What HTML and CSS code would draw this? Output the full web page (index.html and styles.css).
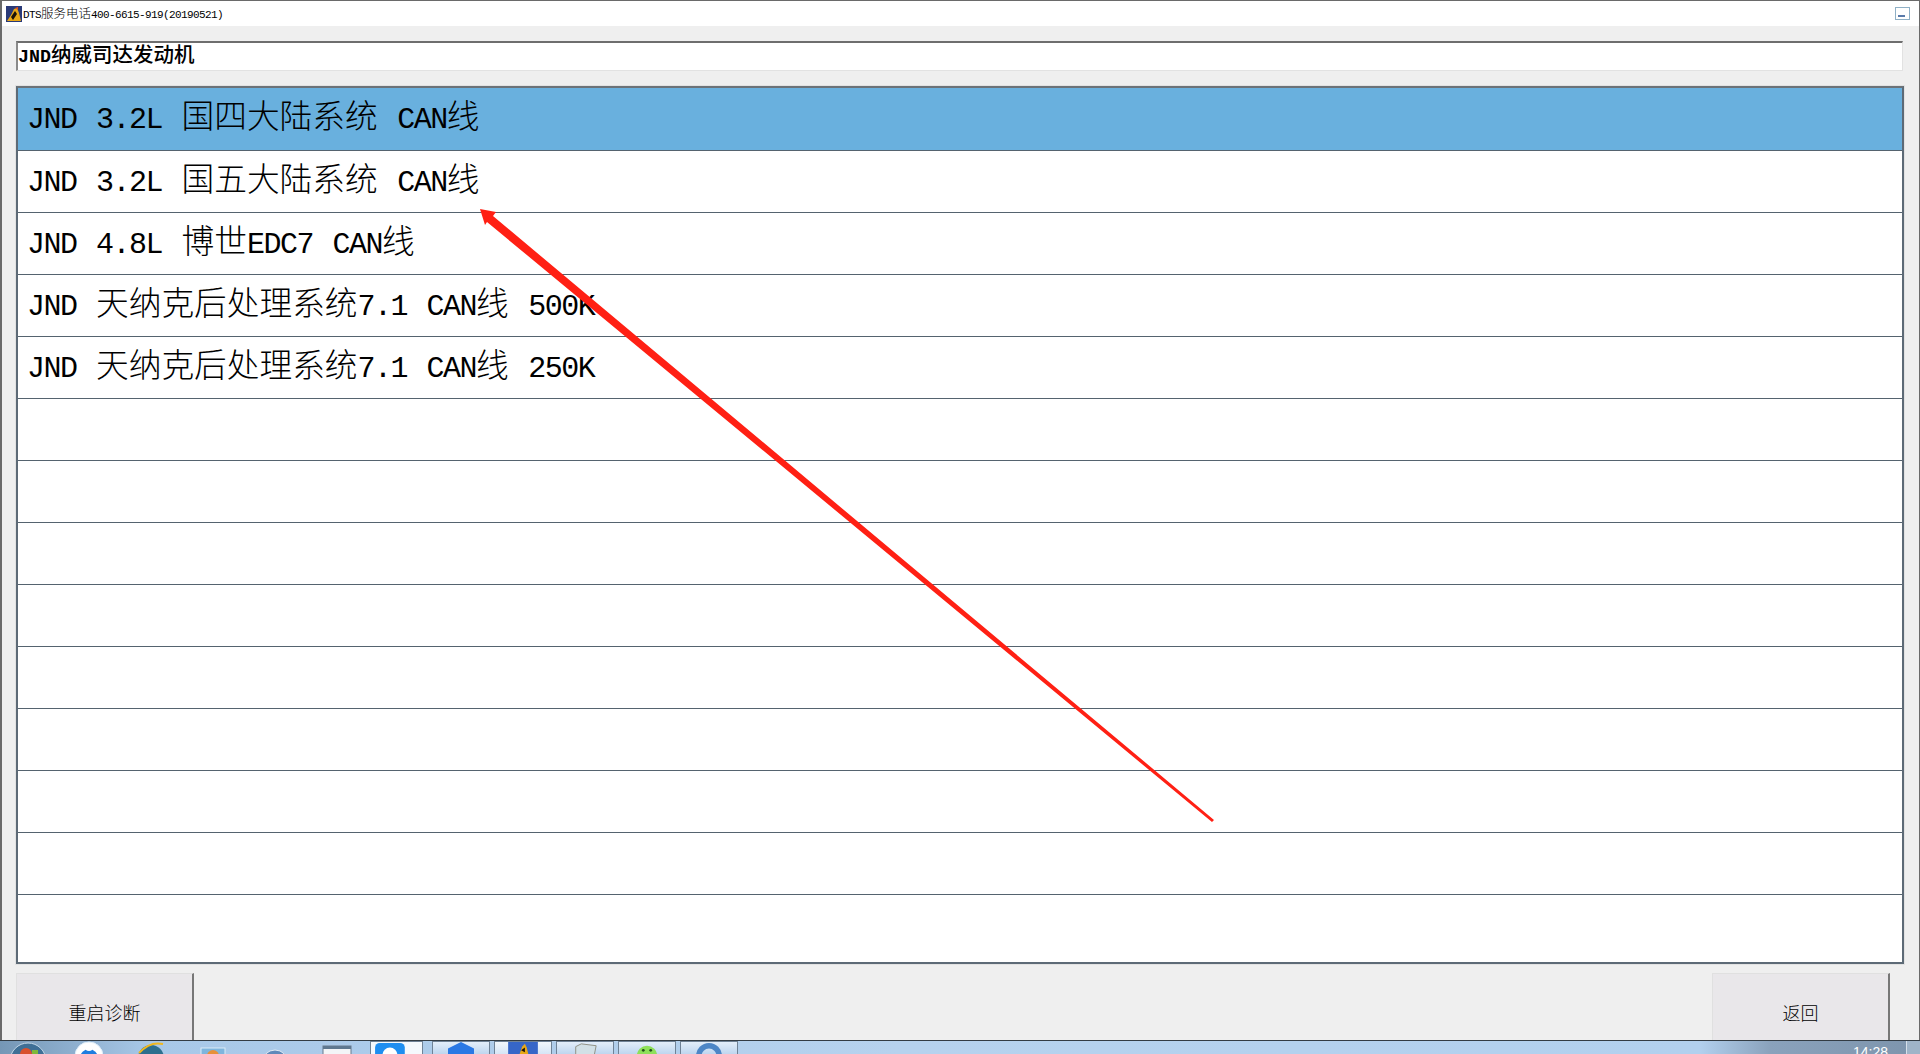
FILE: index.html
```html
<!DOCTYPE html>
<html lang="zh-CN">
<head>
<meta charset="utf-8">
<title>DTS</title>
<link rel="stylesheet" href="styles.css">
</head>
<body>
<div class="window">
  <header class="titlebar">
    <svg class="app-icon" viewBox="0 0 16 16"><rect width="16" height="16" fill="#2a3a78"/><path d="M1 15 L5 9 L8 3 L11 2 L13 7 L15 15 Z" fill="#e8a818"/><path d="M5 11 L9 5 L11 8 L7 14 Z" fill="#1a1208"/><path d="M9 2 L12 1 L12 4 Z" fill="#e8501a"/></svg>
    <span class="title"><span class="lat">DTS</span>服务电话<span class="lat">400-6615-919(20190521)</span></span>
    <span class="min-btn"><i></i></span>
  </header>
  <main class="content">
    <div class="path-box"><span class="lat">JND</span>纳威司达发动机</div>
    <div class="list">
      <div class="row selected"><span class="lat">JND 3.2L </span>国四大陆系统<span class="lat"> CAN</span>线</div>
      <div class="row"><span class="lat">JND 3.2L </span>国五大陆系统<span class="lat"> CAN</span>线</div>
      <div class="row"><span class="lat">JND 4.8L </span>博世<span class="lat">EDC7 CAN</span>线</div>
      <div class="row"><span class="lat">JND </span>天纳克后处理系统<span class="lat">7.1 CAN</span>线<span class="lat"> 500K</span></div>
      <div class="row"><span class="lat">JND </span>天纳克后处理系统<span class="lat">7.1 CAN</span>线<span class="lat"> 250K</span></div>
      <div class="row"></div>
      <div class="row"></div>
      <div class="row"></div>
      <div class="row"></div>
      <div class="row"></div>
      <div class="row"></div>
      <div class="row"></div>
      <div class="row"></div>
      <div class="row last"></div>
    </div>
    <div class="actions">
      <button class="btn">重启诊断</button>
      <button class="btn">返回</button>
    </div>
  </main>
  <footer class="taskbar">
    <svg class="orb" viewBox="0 0 40 14"><circle cx="20" cy="20" r="18" fill="#3f6f96" stroke="#c4d8e8"/><circle cx="18" cy="13" r="6" fill="#d9502e"/><path d="M24 9h6v5h-6z" fill="#7fb83a"/></svg>
    <div class="pins">
      <svg class="pin" viewBox="0 0 30 14"><circle cx="15" cy="15" r="14" fill="#fff" stroke="#dfeefa"/><circle cx="15" cy="17" r="9" fill="#1f7de0"/><circle cx="15" cy="6" r="4" fill="#fff"/></svg>
      <svg class="pin" viewBox="0 0 30 14"><circle cx="15" cy="17" r="13" fill="#2d6f8e"/><path d="M3 12 Q14 0 27 3" fill="none" stroke="#f0b820" stroke-width="2"/></svg>
      <svg class="pin" viewBox="0 0 30 14"><rect x="3" y="7" width="24" height="8" fill="#7fb5dd" stroke="#dcecf7"/><circle cx="15" cy="15" r="6" fill="#e8913a"/></svg>
      <svg class="pin" viewBox="0 0 30 14"><circle cx="15" cy="22" r="13" fill="#5f89ba" stroke="#e2ecf5"/></svg>
      <svg class="pin" viewBox="0 0 30 14"><rect x="1" y="5" width="28" height="10" fill="#f3f5f7" stroke="#6b7b8c"/><rect x="1" y="5" width="28" height="3" fill="#5f7890"/></svg>
    </div>
    <div class="tasks">
      <div class="task active"><svg viewBox="0 0 36 14"><rect x="3" y="1" width="32" height="16" rx="5" fill="#1f8ef0"/><circle cx="19" cy="14" r="8" fill="#fff"/></svg></div>
      <div class="task"><svg viewBox="0 0 36 14"><path d="M4 7 L18 0 L32 7 V14 H4 Z" fill="#2a78e4"/></svg></div>
      <div class="task bright"><svg viewBox="0 0 36 14"><rect x="2" y="0" width="32" height="14" fill="#3666c8"/><path d="M14 14 L17 5 L20 2 L22 6 L24 14 Z" fill="#e8a818"/><path d="M16 9 L20 6 L20 11 Z" fill="#1a1208"/></svg></div>
      <div class="task"><svg viewBox="0 0 36 14"><path d="M8 5 L14 2 L30 4 L28 14 H8 Z" fill="#d2e0e6" stroke="#8d8d80"/></svg></div>
      <div class="task"><svg viewBox="0 0 36 14"><circle cx="18" cy="15" r="11" fill="#8ee05a"/><circle cx="14" cy="9" r="1.5" fill="#23501a"/><circle cx="22" cy="9" r="1.5" fill="#23501a"/></svg></div>
      <div class="task"><svg viewBox="0 0 36 14"><circle cx="18" cy="15" r="11" fill="none" stroke="#4d86c6" stroke-width="6"/></svg></div>
    </div>
    <div class="clock">14:28</div>
    <div class="show-desktop"></div>
  </footer>
</div>
<svg class="annotation" viewBox="0 0 1920 1054"><polygon points="480,209 496,212 493,216 1214,820 1212,822 487,222 485,225" fill="#ff2014"/></svg>
</body>
</html>
```
FILE: styles.css
```css
* { box-sizing: border-box; }
html, body { margin: 0; height: 100%; overflow: hidden; }
body { font-family: "Noto Sans CJK SC", sans-serif; color: #000; background: #efefef; }
.lat { font-family: "Liberation Mono", monospace; white-space: pre; }

.window { height: 1054px; display: flex; flex-direction: column; border: 1px solid #6a6a6a; border-bottom: 0; border-left-width: 2px; }
.titlebar { height: 25px; background: #fff; display: flex; align-items: center; padding: 0 9px 0 4px; flex: none; }
.app-icon { width: 16px; height: 16px; flex: none; }
.title { font-size: 12.5px; line-height: 16px; margin-left: 1px; font-weight: 300; }
.title .lat { font-size: 11px; letter-spacing: -0.6px; }
.min-btn { margin-left: auto; width: 15px; height: 13px; border: 1px solid #8fb0c6; display: flex; align-items: flex-end; padding: 0 0 2px 2px; }
.min-btn i { display: block; width: 7px; height: 2px; background: #5a7aaa; }

.content { flex: 1; min-height: 0; padding: 15px 15px 0 14px; display: flex; flex-direction: column; }
.path-box { height: 30px; flex: none; margin-right: 1px; background: #fff; border: 1px solid #e2e2e2; border-top: 2px solid #6e6e6e; border-left: 2px solid #8a8a8a; font-size: 20.5px; line-height: 20px; font-weight: 500; white-space: nowrap; }
.path-box .lat { font-size: 18.33px; font-weight: 700; }

.list { margin-top: 15px; height: 878px; flex: none; background: #fff; border: 2px solid #5d6a76; border-top-color: #6c7278; display: flex; flex-direction: column; outline: 1px solid #e2e2e2; }
.row { height: 62px; flex: none; border-bottom: 1px solid #55636f; padding: 0 0 0 9px; font-size: 32.7px; line-height: 51px; font-weight: 300; white-space: nowrap; }
.row .lat { font-size: 30px; letter-spacing: -1.5px; word-spacing: 3px; }
.row.selected { background: #69b0de; height: 63px; line-height: 52px; }
.row.last { flex: 1; border-bottom: 0; }

.actions { margin-top: 9px; flex: 1; min-height: 0; display: flex; justify-content: space-between; padding-right: 14px; }
.btn { width: 178px; height: 100%; background: #e9e7ea; border: 1px solid #e0e0e0; border-width: 1px 2px 0 1px; border-right-color: #777; font: 300 18px/1 "Noto Sans CJK SC", sans-serif; color: #000; padding: 10px 0 0; }

.taskbar { height: 14px; flex: none; margin: 0 -1px 0 -2px; border-top: 1px solid #333c44; background: linear-gradient(90deg, #7597b6 0, #a8c8e8 150px, #b6d2ee 900px, #b2d0ee 1700px, #8aa2bc 1770px, #7d94ac 1920px); display: flex; overflow: hidden; position: relative; }
.orb { width: 40px; height: 14px; margin-left: 8px; flex: none; }
.pins { display: flex; gap: 32px; margin-left: 26px; }
.pin { width: 30px; height: 14px; flex: none; }
.tasks { display: flex; gap: 4px; position: absolute; left: 370px; top: 0; }
.task { width: 58px; height: 14px; background: linear-gradient(#e3eefa, #bcd4ee); border: 1px solid #6f8296; border-bottom: 0; overflow: hidden; }
.task svg { display: block; width: 36px; height: 13px; margin: 0 auto; }
.task.active { width: 53px; margin-right: 5px; background: #f5f9fd; }
.task.active svg { margin: 0; }
.task.bright { background: linear-gradient(#f2f7fc, #d4e4f5); }
.clock { position: absolute; left: 1853px; top: 4px; color: #fff; font: 14px/14px "Liberation Sans", sans-serif; }
.show-desktop { position: absolute; right: 0; top: 0; width: 14px; height: 14px; background: #9fb4c8; border-left: 1px solid #d6e0ea; }

.annotation { position: absolute; left: 0; top: 0; width: 1920px; height: 1054px; pointer-events: none; }
```
